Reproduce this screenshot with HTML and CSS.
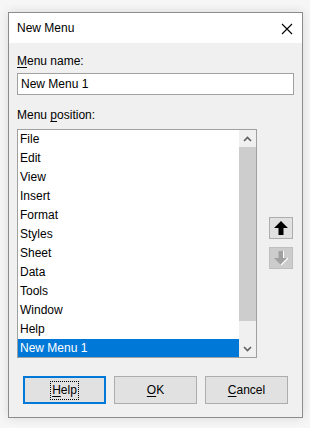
FILE: index.html
```html
<!DOCTYPE html>
<html>
<head>
<meta charset="utf-8">
<link rel="stylesheet" href="styles.css">
</head>
<body>
<div class="dialog">
  <div class="titlebar">
    <span class="title">New Menu</span>
    <svg class="close" width="12" height="12" viewBox="0 0 12 12"><path d="M1 1 L11 11 M11 1 L1 11" stroke="#000" stroke-width="1.1" fill="none"/></svg>
  </div>
  <div class="content">
    <div class="label label-name"><u>M</u>enu name:</div>
    <div class="input">New Menu 1</div>
    <div class="label label-pos">Menu <u>p</u>osition:</div>
    <div class="listrow">
      <div class="listbox">
        <div class="items">
          <div class="item">File</div>
          <div class="item">Edit</div>
          <div class="item">View</div>
          <div class="item">Insert</div>
          <div class="item">Format</div>
          <div class="item">Styles</div>
          <div class="item">Sheet</div>
          <div class="item">Data</div>
          <div class="item">Tools</div>
          <div class="item">Window</div>
          <div class="item">Help</div>
          <div class="item selected">New Menu 1</div>
        </div>
        <div class="scrollbar">
          <div class="sb-arrow"><svg width="9" height="6" viewBox="0 0 9 6"><path d="M1 5 L4.5 1.5 L8 5" stroke="#606060" stroke-width="1.6" fill="none"/></svg></div>
          <div class="sb-thumb"></div>
          <div class="sb-track"></div>
          <div class="sb-arrow"><svg width="9" height="6" viewBox="0 0 9 6"><path d="M1 1 L4.5 4.5 L8 1" stroke="#606060" stroke-width="1.6" fill="none"/></svg></div>
        </div>
      </div>
      <div class="movebtns">
        <div class="movebtn"><svg width="16" height="16" viewBox="0 0 16 16"><path d="M8 1 L15 8 L10.5 8 L10.5 15 L5.5 15 L5.5 8 L1 8 Z" fill="#000"/></svg></div>
        <div class="movebtn disabled"><svg width="16" height="16" viewBox="0 0 16 16"><path d="M5.5 1 L10.5 1 L10.5 8 L15 8 L8 15 L1 8 L5.5 8 Z" fill="#a0a0a0"/><path d="M15 8 L8 15" stroke="#fff" stroke-width="1.2"/><path d="M10.5 1 L10.5 8" stroke="#fff" stroke-width="1"/></svg></div>
      </div>
    </div>
    <div class="buttons">
      <div class="btn default"><span class="focus"><u>H</u>elp</span></div>
      <div class="btn"><u>O</u>K</div>
      <div class="btn"><u>C</u>ancel</div>
    </div>
  </div>
</div>
</body>
</html>
```
FILE: styles.css
```css
html, body {
  margin: 0;
  padding: 0;
}
body {
  background: #f6f6f6;
  font-family: "Liberation Sans", Arial, sans-serif;
  font-size: 12px;
  color: #000;
  width: 310px;
  height: 428px;
  overflow: hidden;
}
.dialog {
  margin: 12px 0 0 8px;
  width: 295px;
  height: 406px;
  box-sizing: border-box;
  border: 1px solid #8c8c8c;
  background: #f0f0f0;
  box-shadow: 0 0 10px rgba(0,0,0,0.12);
  display: flex;
  flex-direction: column;
}
.titlebar {
  height: 30px;
  background: #fff;
  display: flex;
  align-items: center;
  justify-content: space-between;
  padding: 0 9px 0 8px;
  flex: none;
}
.title {
  font-size: 12px;
  line-height: 15px;
  padding-top: 1px;
}
.close {
  display: block;
  margin-top: 1px;
}
.content {
  padding: 11px 8px 0 8px;
  display: flex;
  flex-direction: column;
}
.label {
  line-height: 15px;
  height: 15px;
}
.label u {
  text-decoration-thickness: 1px;
  text-underline-offset: 2px;
}
.input {
  margin-top: 4px;
  height: 22px;
  box-sizing: border-box;
  border: 1px solid #a0a0a0;
  background: #fff;
  padding: 0 3px;
  line-height: 20px;
  width: 277px;
}
.label-pos {
  margin-top: 13px;
}
.listrow {
  margin-top: 6px;
  display: flex;
  align-items: flex-start;
}
.listbox {
  width: 240px;
  height: 229px;
  box-sizing: border-box;
  border: 1px solid #a0a0a0;
  background: #fff;
  display: flex;
  overflow: hidden;
}
.items {
  flex: 1;
  overflow: hidden;
}
.item {
  height: 19px;
  line-height: 19px;
  padding-left: 2px;
  white-space: nowrap;
}
.item.selected {
  background: #0078d7;
  color: #fff;
}
.scrollbar {
  width: 17px;
  flex: none;
  background: #f0f0f0;
  display: flex;
  flex-direction: column;
}
.sb-arrow {
  height: 17px;
  display: flex;
  align-items: center;
  justify-content: center;
  flex: none;
}
.sb-thumb {
  height: 174px;
  background: #cdcdcd;
  flex: none;
}
.sb-track {
  flex: 1;
}
.movebtns {
  margin-left: 12px;
  margin-top: 88px;
  display: flex;
  flex-direction: column;
  gap: 8px;
}
.movebtn {
  width: 24px;
  height: 22px;
  box-sizing: border-box;
  border: 1px solid #adadad;
  background: #e1e1e1;
  display: flex;
  align-items: center;
  justify-content: center;
}
.movebtn.disabled {
  background: #cccccc;
  border-color: #bfbfbf;
}
.buttons {
  margin-top: 18px;
  padding-left: 6px;
  display: flex;
  gap: 8px;
}
.btn {
  width: 83px;
  height: 28px;
  box-sizing: border-box;
  border: 1px solid #adadad;
  background: #e1e1e1;
  display: flex;
  align-items: center;
  justify-content: center;
  font-size: 12px;
}
.btn u {
  text-underline-offset: 2px;
}
.btn.default {
  border: 2px solid #0078d7;
}
.focus {
  outline: 1px dotted #000;
  outline-offset: 0;
  padding: 1px 1px 2px 1px;
  line-height: 14px;
}
```
